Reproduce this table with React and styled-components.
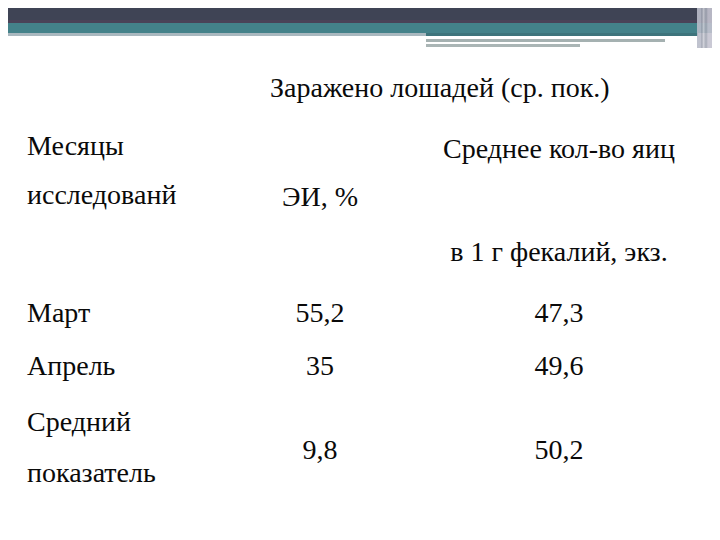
import React from "react";
import styled from "styled-components";

// the page keeps the browser's 8px body margin, so the slide pulls itself back over it
const Slide = styled.div`
  position: relative;
  width: 720px;
  height: 540px;
  margin: -8px;
  overflow: hidden;
  background: #ffffff;
  color: #0a0a0a;
`;

const Header = styled.div`
  position: relative;
  display: flex;
  flex-direction: column;
  height: 48px;
`;

const DarkBar = styled.div`
  height: 20px;
  background: #3f4455;
  border-bottom: 3px solid #4a4358;
`;

const TealBar = styled.div`
  height: 10px;
  background: #44828a;
`;

const StripRow = styled.div`
  display: flex;
`;

const LeftStrip = styled.div`
  width: 426px;
  height: 3px;
  background: #a9b8bf;
`;

const RightStack = styled.div`
  display: flex;
  flex-direction: column;
  width: 272px;
`;

const Stripe = styled.div`
  width: ${(p) => p.$w || "100%"};
  height: ${(p) => p.$h || 3}px;
  background: ${(p) => p.$c};
`;

const Edge = styled.div`
  position: absolute;
  top: 0;
  right: 0;
  width: 23px;
  height: 48px;
  background: linear-gradient(
    to right,
    #b9bcc9 0px,
    #b9bcc9 4px,
    #8c91a0 5px,
    #d3d4dc 6px,
    #9ea3b0 9px,
    #c4c3d0 11px,
    #c4c3d0 23px
  );
  opacity: 0.9;
`;

const Table = styled.div`
  display: flex;
  flex-direction: column;
  padding: 10px 0 0 27px;
`;

const Row = styled.div`
  display: grid;
  grid-template-columns: 173px 240px 238px;
  align-items: center;
  height: ${(p) => p.$h}px;
`;

const Cell = styled.div`
  font-family: "Liberation Serif", "Times New Roman", serif;
  font-size: 28px;
  line-height: 1;
  text-align: ${(p) => p.$align || "center"};
  white-space: nowrap;
  transform: translateY(${(p) => p.$dy || 0}px);
`;

const SpanCell = styled(Cell)`
  grid-column: 2 / span 2;
  padding-left: 70px;
  text-align: left;
`;

const Stack = styled.div`
  display: flex;
  flex-direction: column;
  gap: 23px;
`;

const rows = [
  { month: "Март", ei: "55,2", eggs: "47,3", h: 50 },
  { month: "Апрель", ei: "35", eggs: "49,6", h: 56 },
];

export default function App() {
  return (
    <Slide>
      <Header>
        <DarkBar />
        <TealBar />
        <StripRow>
          <LeftStrip />
          <RightStack>
            <Stripe $c="#3e747c" />
            <Stripe $c="#ffffff" $w="239px" />
            <Stripe $c="#a5b1b1" $w="239px" />
            <Stripe $c="#ffffff" $h={2} />
            <Stripe $c="#aab5b5" $w="154px" />
          </RightStack>
        </StripRow>
        <Edge />
      </Header>

      <Table>
        <Row $h={60}>
          <SpanCell>Заражено лошадей (ср. пок.)</SpanCell>
        </Row>
        <Row $h={60}>
          <Cell $align="left" $dy={-2}>Месяцы</Cell>
          <Cell />
          <Cell $dy={1}>Среднее кол-во яиц</Cell>
        </Row>
        <Row $h={38}>
          <Cell $align="left" $dy={-2}>исследованй</Cell>
          <Cell>ЭИ, %</Cell>
          <Cell />
        </Row>
        <Row $h={72}>
          <Cell />
          <Cell />
          <Cell>в 1 г фекалий, экз.</Cell>
        </Row>
        {rows.map((r) => (
          <Row key={r.month} $h={r.h}>
            <Cell $align="left">{r.month}</Cell>
            <Cell>{r.ei}</Cell>
            <Cell>{r.eggs}</Cell>
          </Row>
        ))}
        <Row $h={107}>
          <Stack>
            <Cell $align="left">Средний</Cell>
            <Cell $align="left">показатель</Cell>
          </Stack>
          <Cell $dy={2}>9,8</Cell>
          <Cell $dy={2}>50,2</Cell>
        </Row>
      </Table>
    </Slide>
  );
}
